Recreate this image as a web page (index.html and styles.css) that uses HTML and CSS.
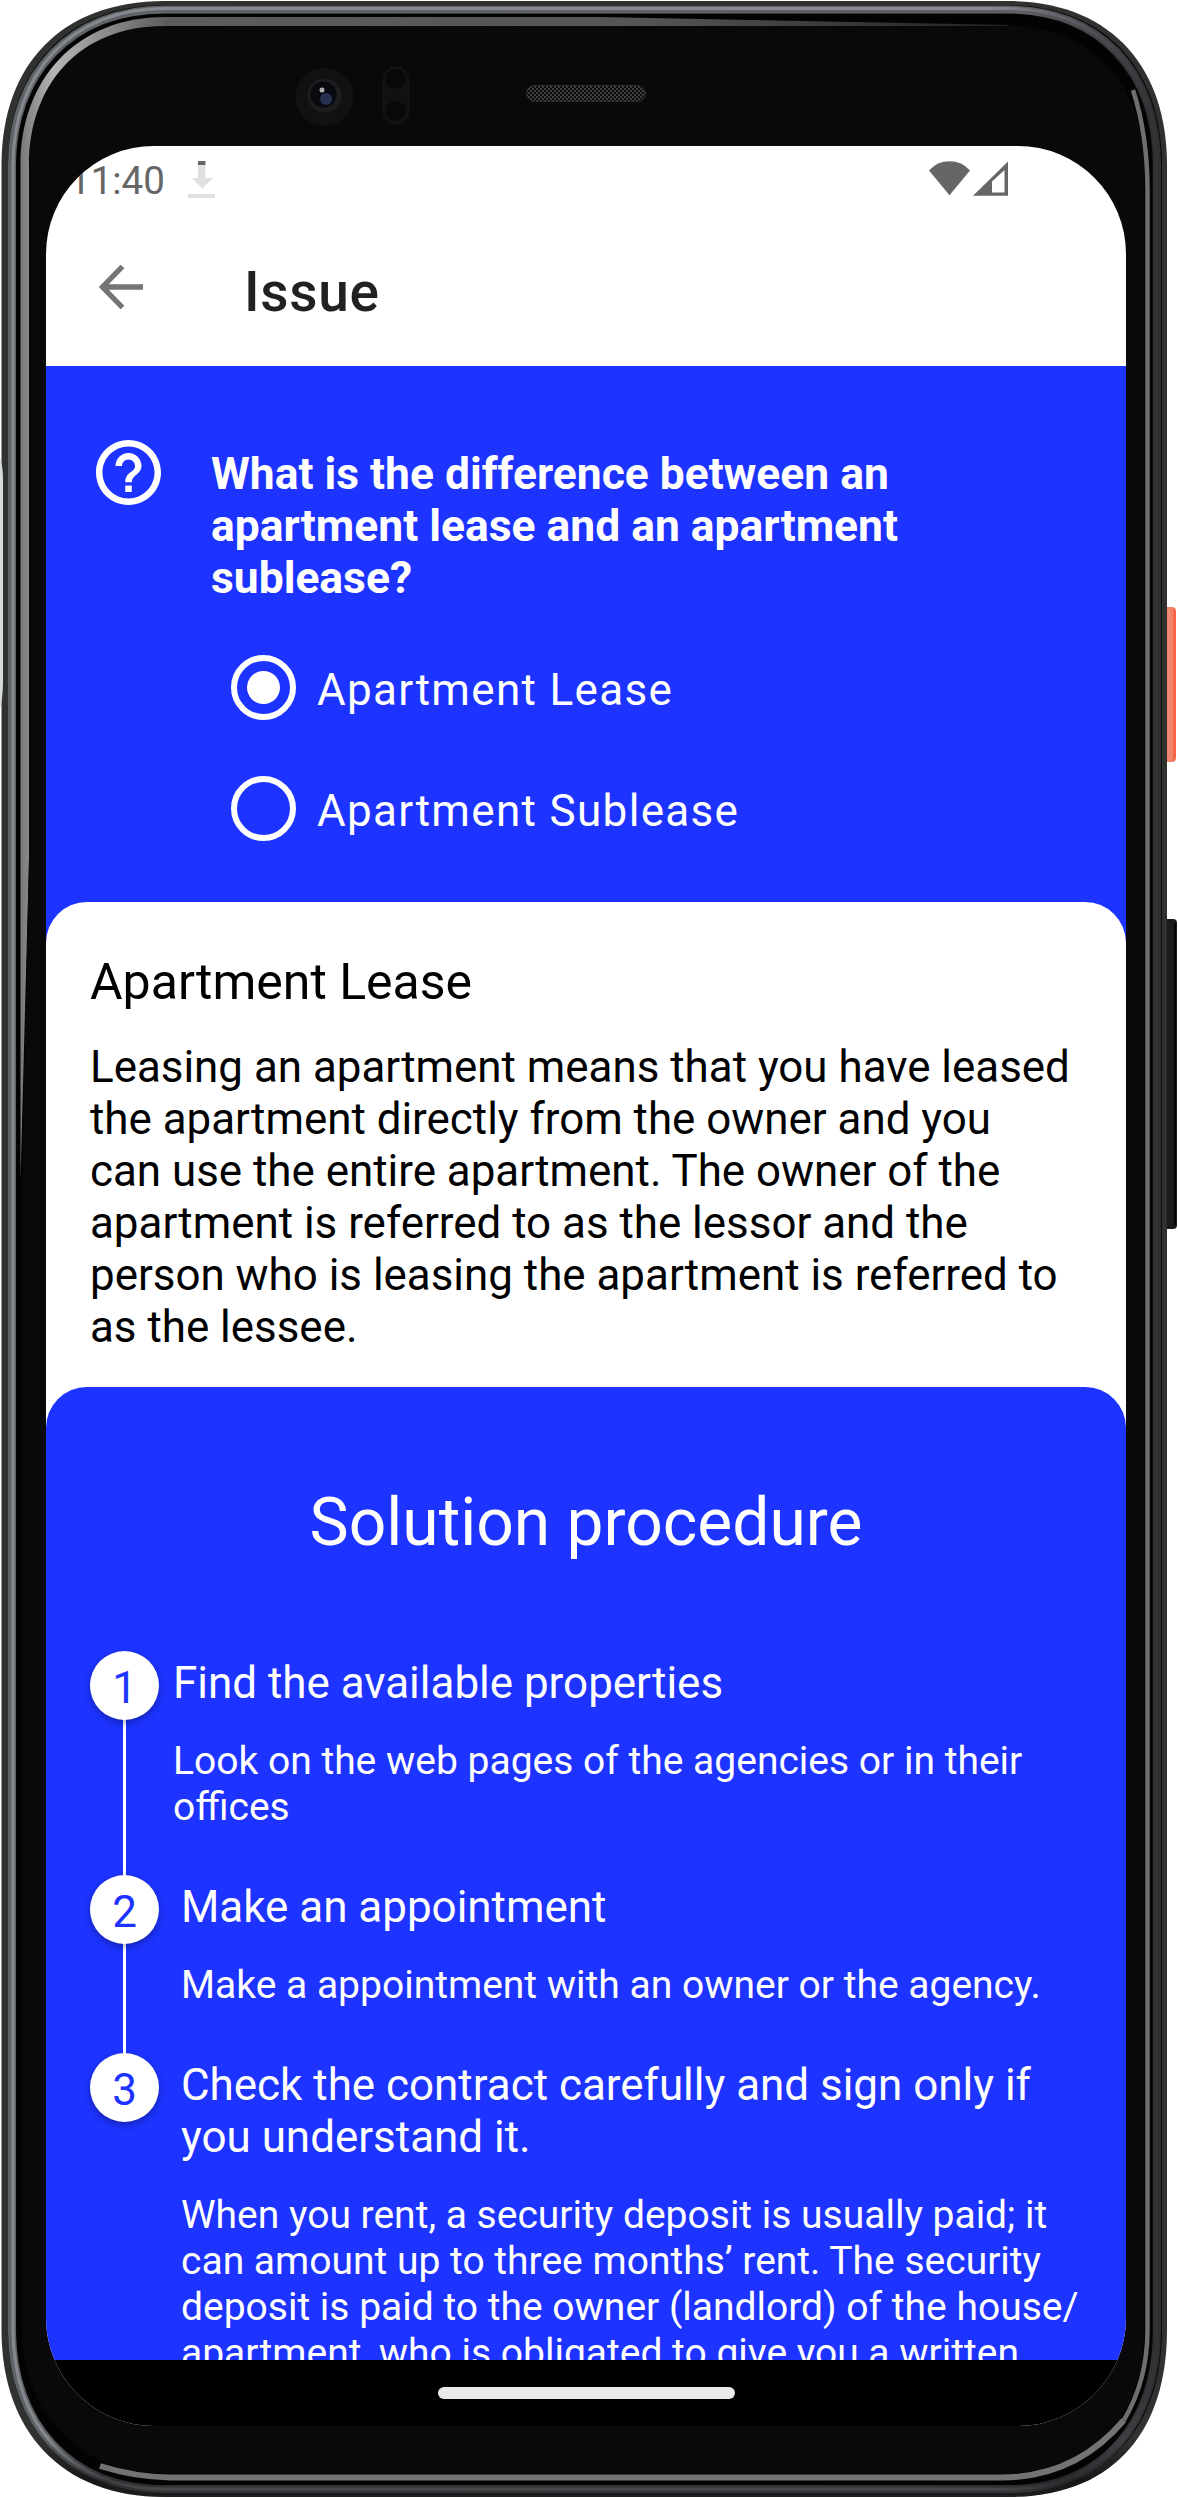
FILE: index.html
```html
<!DOCTYPE html>
<html lang="en">
<head>
<meta charset="utf-8">
<title>Issue</title>
<link rel="stylesheet" href="styles.css">
</head>
<body>
<div class="device">
  <svg class="frame" viewBox="0 0 1178 2498" aria-hidden="true">
    <defs>
      <linearGradient id="side" gradientUnits="userSpaceOnUse" x1="0" x2="1160" y1="0" y2="0">
        <stop offset="0" stop-color="#5f6368"/><stop offset=".88" stop-color="#5f6066"/><stop offset=".97" stop-color="#3a3b3e"/><stop offset="1" stop-color="#2d2e30"/>
      </linearGradient>
      <linearGradient id="shine" gradientUnits="userSpaceOnUse" x1="0" x2="1160" y1="0" y2="0">
        <stop offset="0" stop-color="#85898e"/><stop offset=".85" stop-color="#8b8b95"/><stop offset=".96" stop-color="#45464a"/><stop offset="1" stop-color="#303133"/>
      </linearGradient>
      <linearGradient id="glass" gradientUnits="userSpaceOnUse" x1="20" x2="1150" y1="0" y2="0">
        <stop offset="0" stop-color="#787878"/><stop offset=".03" stop-color="#b4b4b4"/><stop offset=".07" stop-color="#909090"/><stop offset=".13" stop-color="#5c5c5c"/><stop offset=".55" stop-color="#555"/><stop offset=".87" stop-color="#222"/><stop offset="1" stop-color="#111"/>
      </linearGradient>
      <linearGradient id="key" x1="0" x2="1" y1="0" y2="0">
        <stop offset="0" stop-color="#f0765e"/><stop offset=".35" stop-color="#f18871"/><stop offset=".75" stop-color="#ef8066"/><stop offset=".85" stop-color="#ff5a38"/><stop offset="1" stop-color="#f56a4c"/>
      </linearGradient>
      <linearGradient id="base" gradientUnits="userSpaceOnUse" x1="0" x2="0" y1="2440" y2="2498">
        <stop offset="0" stop-color="#000" stop-opacity="0"/><stop offset=".7" stop-color="#000" stop-opacity=".55"/><stop offset="1" stop-color="#000" stop-opacity=".4"/>
      </linearGradient>
      <pattern id="mesh" width="4" height="4" patternUnits="userSpaceOnUse">
        <rect width="4" height="4" fill="#0b0b0b"/><circle cx="1" cy="1" r=".9" fill="#555"/><circle cx="3" cy="3" r=".9" fill="#555"/>
      </pattern>
    </defs>
    <path d="M1164 607h8q4 0 4 5v145q0 5-4 5h-8z" fill="url(#key)"/>
    <path d="M1164 919h9q4 0 4 4v302q0 4-4 4h-9z" fill="#1b1b1b"/>
    <path d="M1175 923v302" stroke="#050505" stroke-width="2"/>
    <path d="M165 1H1008C1110 1 1167 66 1167 165V2330C1167 2430 1115 2497 1008 2497H165C60 2497 1.500 2430 1.500 2330V165C1.500 66 60 1 165 1Z" fill="#303230"/>
    <path d="M165 5H1008C1104 5 1162 68 1162 165V2330C1162 2426 1108 2491 1008 2491H165C66 2491 8 2426 8 2330V165C8 70 66 5 165 5Z" fill="#0c0c0d"/>
    <path d="M165 9.500H1008C1098 9.500 1157 70 1157 165V2330C1157 2422 1104 2489 1008 2489H165C68 2489 12 2422 12 2330V165C12 74 70 9.500 165 9.500Z" fill="none" stroke="url(#side)" stroke-width="8"/>
    <path d="M165 8.500H1008C1098 8.500 1157 70 1157 165V2330C1157 2422 1104 2489 1008 2489H165C68 2489 13 2422 13 2330V165C13 74 70 8.500 165 8.500Z" fill="none" stroke="url(#shine)" stroke-width="3"/>
    <path d="M1.500 2330H1167C1167 2430 1115 2497 1008 2497H165C60 2497 1.500 2430 1.500 2330Z" fill="url(#base)"/>
    <path d="M165 14H1008C1094 14 1152 74 1152 165V2330C1152 2418 1102 2485 1008 2485H165C72 2485 16.500 2418 16.500 2330V165C16.500 78 74 14 165 14Z" fill="#030303"/>
    <path d="M20.500 1180V165C20.500 80 76 17 165 17H600L1010 25L1000 30H165L29 165V860Z" fill="url(#glass)"/>
    <path d="M165 26H1008C1090 26 1144 84 1144 165V2330C1144 2410 1100 2474 1008 2474H165C78 2474 22 2410 22 2330V1180L29 860V165C29 88 76 26 165 26Z" fill="#09090b"/>
    <path d="M1133 90Q1147.500 135 1147.500 190V2330Q1147.500 2380 1124 2420" fill="none" stroke="#6e6e6e" stroke-width="4.500"/>
    <path d="M100 2466Q135 2477 170 2477.500H1000Q1075 2478 1124 2420" fill="none" stroke="#737373" stroke-width="6"/>
    <path d="M0 458q3 8 3 22v200q0 18-3 28z" fill="#d7dbd9"/>
    <ellipse cx="324.500" cy="97" rx="29" ry="29" fill="#111112"/>
    <circle cx="324.500" cy="95.500" r="17" fill="#1d1d1f"/><circle cx="323.500" cy="94.500" r="13" fill="#090a0f"/>
    <circle cx="326" cy="99" r="6" fill="#26304f"/><circle cx="322" cy="90" r="2.500" fill="#aeaeb2"/>
    <rect x="383" y="67" width="26" height="57" rx="13" fill="#111112" stroke="#151516"/>
    <circle cx="395.500" cy="79" r="10" fill="#09090a"/><circle cx="395.500" cy="111" r="10" fill="#09090a"/>
    <rect x="526.500" y="85.500" width="119" height="16" rx="8" fill="url(#mesh)" stroke="#2c2c2c"/>
  </svg>

  <main class="screen">
    <header class="status">
      <span class="clock">11:40</span>
      <svg class="download" viewBox="0 0 28 38"><path d="M10 0h7.500v4H10z" fill="#666"/><path d="M10 4h7.500v13h7.500L14.200 27.500 4 17h6zM0 33h27v4H0z" fill="#e0e0e0"/></svg>
      <svg class="signal" viewBox="0 0 80 36"><path d="M0 9.500Q8 .3 20.500 .3T41 9.500L20.500 34.300z" fill="#666"/><path fill-rule="evenodd" d="M44 34.800L79 .5V34.800ZM63 31.500V20.500L75.500 9V31.500Z" fill="#666"/></svg>
    </header>
    <nav class="appbar">
      <svg class="back" viewBox="0 0 44 44"><path d="M23.500 1.500L3.500 22L23.500 42.500M3.500 22H44" fill="none" stroke="#757575" stroke-width="5.300"/></svg>
      <h1>Issue</h1>
    </nav>

    <section class="question">
      <svg class="help" viewBox="2 2 20 20"><path fill="#fff" d="M11 18h2v-2h-2v2zm1-16C6.480 2 2 6.480 2 12s4.480 10 10 10 10-4.480 10-10S17.520 2 12 2zm0 18c-4.410 0-8-3.590-8-8s3.590-8 8-8 8 3.590 8 8-3.590 8-8 8zm0-14c-2.210 0-4 1.790-4 4h2c0-1.100.9-2 2-2s2 .9 2 2c0 2-3 1.750-3 5h2c0-2.250 3-2.500 3-5 0-2.210-1.790-4-4-4z"/></svg>
      <div class="ask">
        <h2>What is the difference between an<br>apartment lease and an apartment<br>sublease?</h2>
        <div class="option"><span class="radio on"></span><span class="label">Apartment Lease</span></div>
        <div class="option"><span class="radio"></span><span class="label">Apartment Sublease</span></div>
      </div>
    </section>

    <div class="answer-wrap">
      <section class="answer">
        <h3>Apartment Lease</h3>
        <p>Leasing an apartment means that you have leased<br>the apartment directly from the owner and you<br>can use the entire apartment. The owner of the<br>apartment is referred to as the lessor and the<br>person who is leasing the apartment is referred to<br>as the lessee.</p>
      </section>
    </div>

    <section class="solution">
      <h2>Solution procedure</h2>
      <ol class="steps">
        <li class="step first">
          <span class="num">1</span>
          <div class="body"><h4>Find the available properties</h4><p>Look on the web pages of the agencies or in their<br>offices</p></div>
        </li>
        <li class="step second">
          <span class="num">2</span>
          <div class="body"><h4>Make an appointment</h4><p>Make a appointment with an owner or the agency.</p></div>
        </li>
        <li class="step last">
          <span class="num">3</span>
          <div class="body"><h4>Check the contract carefully and sign only if<br>you understand it.</h4><p>When you rent, a security deposit is usually paid; it<br>can amount up to three months’ rent. The security<br>deposit is paid to the owner (landlord) of the house/<br>apartment, who is obligated to give you a written</p></div>
        </li>
      </ol>
    </section>
    <footer class="navbar"><span class="pill"></span></footer>
  </main>
</div>
</body>
</html>
```

FILE: styles.css
```css
* { box-sizing: border-box; margin: 0; padding: 0; }
body { background: #fff; font-family: Roboto, "Liberation Sans", sans-serif; font-weight: 400; }
.device { position: relative; width: 1178px; height: 2498px; padding: 146px 52px 72px 46px; overflow: hidden; }
.frame { position: absolute; left: 0; top: 0; width: 1178px; height: 2498px; }
.screen { position: relative; display: flex; flex-direction: column; width: 1080px; height: 2280px; border-radius: 108px; overflow: hidden; background: #fff; }

.status { display: flex; flex: none; height: 66px; padding: 0 117px 0 23px; }
.clock { flex: none; width: 119px; margin-top: 11px; color: #666; font-size: 38.5px; line-height: 48px; }
.download { width: 28px; height: 38px; margin-top: 15px; }
.signal { width: 80px; height: 36px; margin: 15px 0 0 auto; }

.appbar { display: flex; flex: none; align-items: flex-start; height: 154px; }
.back { width: 44px; height: 44px; margin: 53px 0 0 53px; }
.appbar h1 { margin: 48px 0 0 101px; font-size: 55px; font-weight: 500; line-height: 64px; letter-spacing: .0125em; color: #212121; }

.question { display: flex; flex: none; align-items: flex-start; height: 536px; padding: 74px 0 0 50px; background: #1d33ff; color: #fff; }
.help { width: 65px; height: 65px; flex: none; }
.ask { margin-left: 50px; padding-top: 8px; }
.ask h2 { font-size: 44.4px; line-height: 52px; font-weight: 700; white-space: nowrap; margin-bottom: 23px; }
.option { display: flex; align-items: center; height: 121px; padding-left: 20px; font-size: 44px; letter-spacing: 1.33px; gap: 21px; }
.label { padding-top: 5px; }
.radio { width: 65px; height: 65px; border: 6.5px solid #fff; border-radius: 50%; padding: 10px; }
.radio.on::before { content: ""; display: block; width: 100%; height: 100%; border-radius: 50%; background: #fff; }

.answer-wrap { flex: none; height: 485px; background: #1d33ff; }
.answer { height: 526px; padding: 51px 44px 0; border-radius: 41px 41px 0 0; background: #fff; color: #000; }
.answer h3 { font-size: 50px; line-height: 58px; font-weight: 400; }
.answer p { margin-top: 30px; font-size: 43.9px; line-height: 52px; white-space: nowrap; }

.solution { position: relative; flex: 1; min-height: 0; overflow: hidden; padding: 97px 44px 0; border-radius: 41px 41px 0 0; background: #1d33ff; color: #fff; }
.solution h2 { font-size: 65.9px; line-height: 78px; font-weight: 400; text-align: center; }
.steps { margin-top: 89px; list-style: none; }
.step { position: relative; display: flex; align-items: flex-start; }
.first { height: 224px; }
.second { height: 178px; }
.step:not(.last)::before { content: ""; position: absolute; left: 33px; top: 60px; bottom: 0; width: 3px; background: #fff; }
.num { position: relative; flex: none; width: 69px; height: 69px; border-radius: 50%; background: #fff; color: #1d33ff; font-size: 44px; line-height: 74px; text-align: center; box-shadow: 0 3px 7px rgba(0, 0, 0, .3); }
.body { margin-left: 22px; padding-top: 6px; white-space: nowrap; }
.first .body { margin-left: 14px; }
.body h4 { font-size: 43.95px; line-height: 52px; font-weight: 400; }
.body p { margin-top: 29px; font-size: 39px; line-height: 46px; }

.navbar { display: flex; flex: none; align-items: center; justify-content: center; height: 66px; background: #000; }
.pill { width: 297px; height: 12px; border-radius: 6px; background: #e9e9e9; }
```
